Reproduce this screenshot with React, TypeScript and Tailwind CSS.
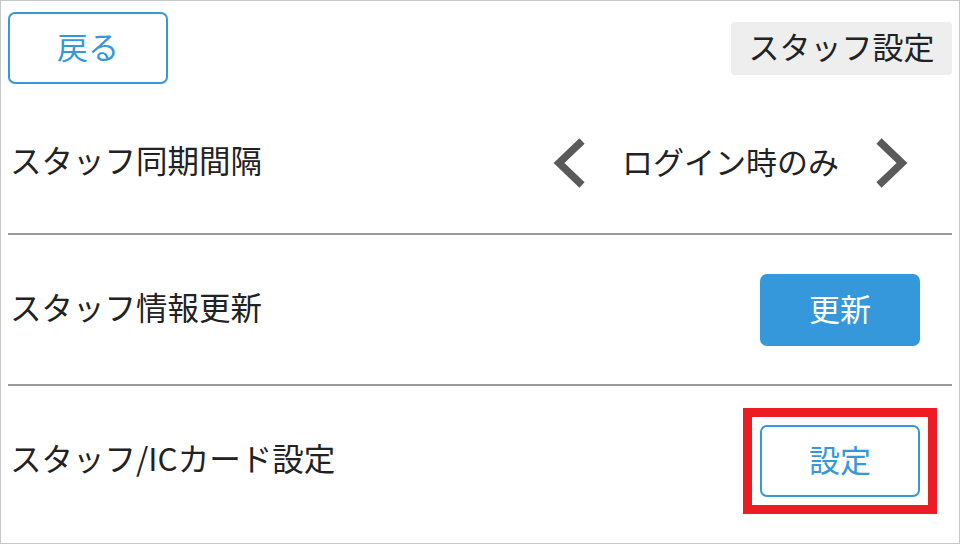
import { useState } from "react";

const intervals = ["ログイン時のみ", "1時間ごと", "6時間ごと", "12時間ごと", "24時間ごと"];

function Chevron({ dir }: { dir: "left" | "right" }) {
  const points = dir === "left" ? "29,6 6,28 29,50" : "7,6 30,28 7,50";
  return (
    <svg width="36" height="56" viewBox="0 0 36 56" className="blur-[0.6px]">
      <polyline points={points} fill="none" stroke="#5a5a5a" strokeWidth="7.5" strokeLinejoin="miter" />
    </svg>
  );
}

function Divider() {
  return <div className="h-[2px] bg-[#999999]" />;
}

export default function App() {
  const [idx, setIdx] = useState(0);

  return (
    <div
      className="flex h-[544px] w-[960px] flex-col border border-[#c8c8c8] bg-white px-[7px] text-[#222222]"
      style={{ fontFamily: '"Noto Sans CJK JP", "Noto Sans", sans-serif' }}
    >
      {/* header */}
      <div className="mt-[11px] flex h-[72px] items-center justify-between">
        <button
          type="button"
          className="flex h-[72px] w-[160px] items-center justify-center rounded-[7px] border-2 border-[#3498db] pb-[5px] text-[31px] leading-none text-[#3498db]"
        >
          戻る
        </button>
        <div className="flex h-[53px] w-[221px] items-center justify-center rounded-[4px] bg-[#eeeeee] pb-[5px] text-[31px] leading-none">
          スタッフ設定
        </div>
      </div>

      {/* sync interval */}
      <div className="flex h-[149px] items-center pl-[2px] pt-[8px]">
        <span className="pb-[5px] text-[31.5px] leading-none">スタッフ同期間隔</span>
        <div className="ml-auto mr-[44px] flex items-center">
          <button type="button" onClick={() => setIdx((idx + intervals.length - 1) % intervals.length)}>
            <Chevron dir="left" />
          </button>
          <span className="ml-[33px] mr-[26px] w-[224px] pb-[4px] text-[31px] leading-none">{intervals[idx]}</span>
          <button type="button" onClick={() => setIdx((idx + 1) % intervals.length)}>
            <Chevron dir="right" />
          </button>
        </div>
      </div>
      <Divider />

      {/* staff info update */}
      <div className="flex h-[149px] items-center pl-[2px]">
        <span className="pb-[5px] text-[31.5px] leading-none">スタッフ情報更新</span>
        <button
          type="button"
          className="ml-auto mr-[32px] flex h-[72px] w-[160px] items-center justify-center rounded-[7px] bg-[#3498db] pb-[5px] text-[31px] leading-none text-white"
        >
          更新
        </button>
      </div>
      <Divider />

      {/* staff / IC card */}
      <div className="flex h-[149px] items-center pl-[2px]">
        <span className="pb-[5px] text-[31.5px] leading-none">スタッフ/ICカード設定</span>
        <div className="ml-auto mr-[15px] border-[9px] border-[#ec1c24] p-[8px]">
          <button
            type="button"
            className="flex h-[72px] w-[160px] items-center justify-center rounded-[7px] border-2 border-[#3498db] pb-[5px] text-[31px] leading-none text-[#3498db]"
          >
            設定
          </button>
        </div>
      </div>
    </div>
  );
}
